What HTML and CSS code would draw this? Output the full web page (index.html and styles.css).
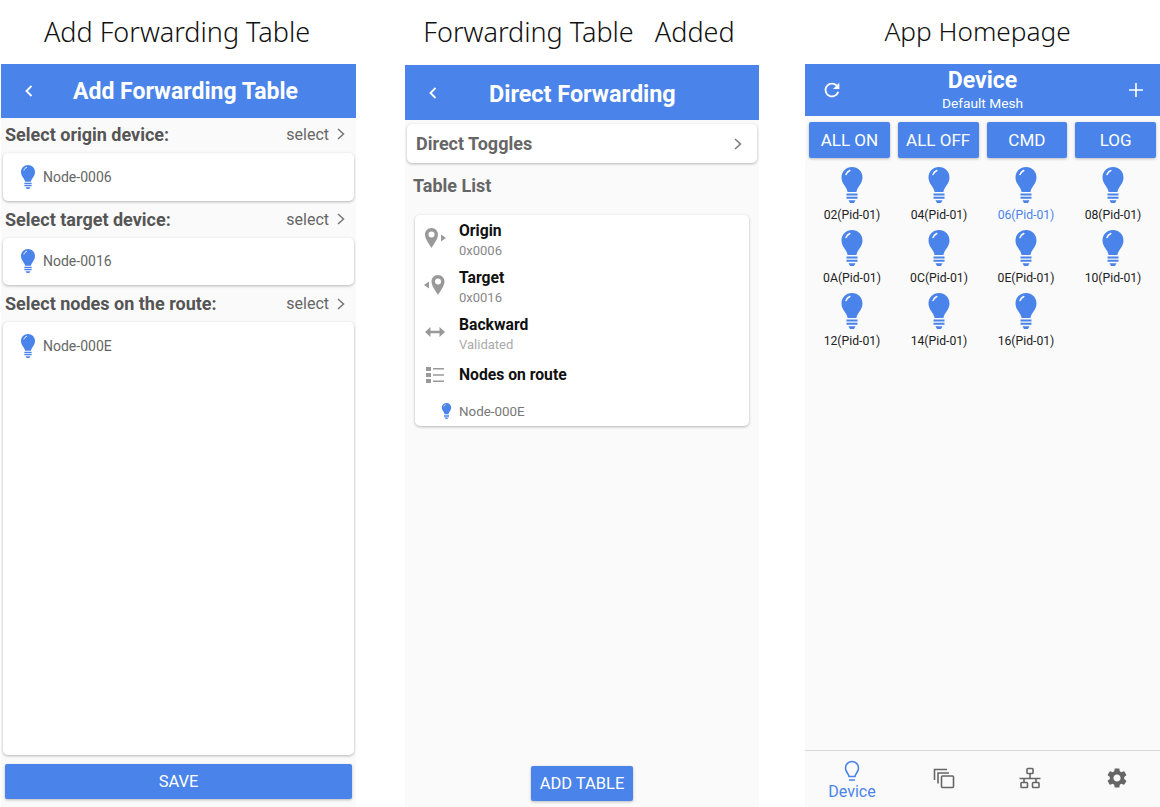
FILE: index.html
```html
<!DOCTYPE html>
<html lang="en">
<head>
    <meta charset="UTF-8">
    <meta name="viewport" content="width=device-width, initial-scale=1.0">
    <title>Direct Forwarding Screens</title>
    <link rel="stylesheet" href="styles.css">
</head>
<body>
    <svg class="defs" width="0" height="0">
        <symbol id="bulb" viewBox="0 0 22 36">
            <path fill="#4a84ea" d="M11 0C5 0 .5 4.600.5 10.400c0 3.200 1.300 5.600 3 8.200 1.300 2 2.700 4 3.100 6.400h8.800c.4-2.400 1.800-4.400 3.100-6.400 1.700-2.600 3-5 3-8.200C21.500 4.600 17 0 11 0z"/>
            <path fill="none" stroke="#fff" stroke-width="1.500" stroke-linecap="round" d="M5 7.500C5.800 5.500 7 4.300 8.800 3.500"/>
            <path fill="#4a84ea" d="M5.500 26.500h11v2h-11zM5.500 29.800h11v2h-11zM7.500 33.200h7L13 36H9z"/>
        </symbol>
    </svg>

    <div class="screens">
        <section class="screen-col">
            <h2 class="shot-title">Add Forwarding Table</h2>
            <div class="phone">
                <header class="app-header">
                    <svg class="back-icon" viewBox="0 0 10 14"><polyline points="7.500,2 2.500,7 7.500,12"/></svg>
                    <div class="app-header-title">Add Forwarding Table</div>
                </header>

                <div class="select-row first">
                    <span class="select-label">Select origin device:</span>
                    <span class="select-action">select <svg class="chevron" viewBox="0 0 10 14"><polyline points="2,2 7.500,7 2,12"/></svg></span>
                </div>
                <div class="card node-card">
                    <svg class="bulb-md"><use href="#bulb"/></svg>
                    <span>Node-0006</span>
                </div>

                <div class="select-row">
                    <span class="select-label">Select target device:</span>
                    <span class="select-action">select <svg class="chevron" viewBox="0 0 10 14"><polyline points="2,2 7.500,7 2,12"/></svg></span>
                </div>
                <div class="card node-card">
                    <svg class="bulb-md"><use href="#bulb"/></svg>
                    <span>Node-0016</span>
                </div>

                <div class="select-row">
                    <span class="select-label">Select nodes on the route:</span>
                    <span class="select-action">select <svg class="chevron" viewBox="0 0 10 14"><polyline points="2,2 7.500,7 2,12"/></svg></span>
                </div>
                <div class="card node-card route-card">
                    <svg class="bulb-md"><use href="#bulb"/></svg>
                    <span>Node-000E</span>
                </div>

                <button class="btn save-btn" type="button">SAVE</button>
            </div>
        </section>

        <section class="screen-col middle-col">
            <h2 class="shot-title">Forwarding Table &nbsp; Added</h2>
            <div class="phone">
                <header class="app-header tall">
                    <svg class="back-icon" viewBox="0 0 10 14"><polyline points="7.500,2 2.500,7 7.500,12"/></svg>
                    <div class="app-header-title">Direct Forwarding</div>
                </header>

                <div class="card toggle-card">
                    <span>Direct Toggles</span>
                    <svg class="chevron" viewBox="0 0 10 14"><polyline points="2,2 7.500,7 2,12"/></svg>
                </div>

                <h3 class="list-title">Table List</h3>

                <div class="card table-card">
                    <div class="table-row">
                        <svg class="row-icon" viewBox="0 0 24 24"><path d="M8.500 2C4.900 2 2 4.900 2 8.500c0 4.500 4.300 9.800 6.500 13.500 2.200-3.700 6.500-9 6.500-13.500C15 4.900 12.100 2 8.500 2zm0 9.500a3 3 0 1 1 0-6 3 3 0 0 1 0 6zM18 8.500l5 3.500-5 3.500z"/></svg>
                        <div><div class="row-name">Origin</div><div class="row-value">0x0006</div></div>
                    </div>
                    <div class="table-row">
                        <svg class="row-icon" viewBox="0 0 24 24"><path d="M15 2c-3.600 0-6.500 2.900-6.500 6.500 0 4.500 4.300 9.800 6.500 13.500 2.200-3.700 6.500-9 6.500-13.500C21.500 4.900 18.600 2 15 2zm0 9.500a3 3 0 1 1 0-6 3 3 0 0 1 0 6zM6 8.500L1 12l5 3.500z"/></svg>
                        <div><div class="row-name">Target</div><div class="row-value">0x0016</div></div>
                    </div>
                    <div class="table-row">
                        <svg class="row-icon" viewBox="0 0 24 24"><path d="M2 12l5.500-5v3.700h9V7l5.500 5-5.500 5v-3.700h-9V17z"/></svg>
                        <div><div class="row-name">Backward</div><div class="row-value light">Validated</div></div>
                    </div>
                    <div class="table-row nodes-row">
                        <svg class="row-icon" viewBox="0 0 24 24"><path d="M3 4h5v4H3zM3 10h5v4H3zM3 16h5v4H3zM10 5h11v1.600H10zM10 11.200h11v1.600H10zM10 17.400h11V19H10z"/></svg>
                        <div class="row-name">Nodes on route</div>
                    </div>
                    <div class="route-node">
                        <svg class="bulb-sm"><use href="#bulb"/></svg>
                        <span>Node-000E</span>
                    </div>
                </div>

                <div class="add-wrap">
                    <button class="btn add-btn" type="button">ADD TABLE</button>
                </div>
            </div>
        </section>

        <section class="screen-col last-col">
            <h2 class="shot-title">App Homepage</h2>
            <div class="phone">
                <header class="home-header">
                    <svg class="refresh-icon" viewBox="0 0 24 24"><path d="M17.650 6.350C16.200 4.900 14.210 4 12 4c-4.420 0-7.990 3.580-7.990 8s3.570 8 7.990 8c3.730 0 6.840-2.550 7.730-6h-2.080c-.82 2.330-3.040 4-5.650 4-3.310 0-6-2.690-6-6s2.690-6 6-6c1.660 0 3.140.69 4.220 1.780L13 11h7V4l-2.350 2.350z"/></svg>
                    <div class="home-title">
                        <div class="home-name">Device</div>
                        <div class="home-mesh">Default Mesh</div>
                    </div>
                    <svg class="plus-icon" viewBox="0 0 16 16"><path d="M8 1v14M1 8h14"/></svg>
                </header>

                <div class="action-row">
                    <button class="btn" type="button">ALL ON</button>
                    <button class="btn" type="button">ALL OFF</button>
                    <button class="btn" type="button">CMD</button>
                    <button class="btn" type="button">LOG</button>
                </div>

                <div class="device-grid">
                    <div class="device"><svg class="bulb-lg"><use href="#bulb"/></svg><span>02(Pid-01)</span></div>
                    <div class="device"><svg class="bulb-lg"><use href="#bulb"/></svg><span>04(Pid-01)</span></div>
                    <div class="device active"><svg class="bulb-lg"><use href="#bulb"/></svg><span>06(Pid-01)</span></div>
                    <div class="device"><svg class="bulb-lg"><use href="#bulb"/></svg><span>08(Pid-01)</span></div>
                    <div class="device"><svg class="bulb-lg"><use href="#bulb"/></svg><span>0A(Pid-01)</span></div>
                    <div class="device"><svg class="bulb-lg"><use href="#bulb"/></svg><span>0C(Pid-01)</span></div>
                    <div class="device"><svg class="bulb-lg"><use href="#bulb"/></svg><span>0E(Pid-01)</span></div>
                    <div class="device"><svg class="bulb-lg"><use href="#bulb"/></svg><span>10(Pid-01)</span></div>
                    <div class="device"><svg class="bulb-lg"><use href="#bulb"/></svg><span>12(Pid-01)</span></div>
                    <div class="device"><svg class="bulb-lg"><use href="#bulb"/></svg><span>14(Pid-01)</span></div>
                    <div class="device"><svg class="bulb-lg"><use href="#bulb"/></svg><span>16(Pid-01)</span></div>
                </div>

                <nav class="tabbar">
                    <div class="tab active">
                        <svg class="tab-icon outline" viewBox="0 0 24 24"><path d="M9 21h6M9 17.500h6c0-2.500 3.500-4 3.500-8.500a6.500 6.500 0 0 0-13 0c0 4.500 3.500 6 3.500 8.500z"/></svg>
                        <span>Device</span>
                    </div>
                    <div class="tab">
                        <svg class="tab-icon outline" viewBox="0 0 24 24"><path d="M2.500 14V3.500H15M6 17.500V7h11"/><rect x="9.500" y="10" width="12" height="11.500" rx="1"/></svg>
                    </div>
                    <div class="tab">
                        <svg class="tab-icon outline" viewBox="0 0 24 24"><rect x="9" y="2.500" width="6" height="5" rx=".8"/><rect x="3" y="16.500" width="6.500" height="5" rx=".8"/><rect x="14.500" y="16.500" width="6.500" height="5" rx=".8"/><path d="M12 7.500v5M1.500 12.500h21M6 12.500v4M18 12.500v4"/></svg>
                    </div>
                    <div class="tab">
                        <svg class="tab-icon" viewBox="0 0 24 24"><path d="M19.140 12.940c.04-.3.06-.61.06-.94 0-.32-.02-.64-.07-.94l2.030-1.580c.18-.14.23-.41.12-.61l-1.920-3.320c-.12-.22-.37-.29-.59-.22l-2.390.96c-.5-.38-1.030-.7-1.620-.94l-.36-2.540c-.04-.24-.24-.41-.48-.41h-3.840c-.24 0-.43.17-.47.41l-.36 2.540c-.59.24-1.130.57-1.620.94l-2.390-.96c-.22-.08-.47 0-.59.22L2.740 8.870c-.12.21-.08.47.12.61l2.030 1.580c-.05.3-.09.63-.09.94s.02.64.07.94l-2.030 1.580c-.18.14-.23.41-.12.61l1.920 3.320c.12.22.37.29.59.22l2.390-.96c.5.38 1.030.7 1.620.94l.36 2.540c.05.24.24.41.48.41h3.840c.24 0 .44-.17.47-.41l.36-2.540c.59-.24 1.130-.56 1.620-.94l2.390.96c.22.08.47 0 .59-.22l1.920-3.320c.12-.22.07-.47-.12-.61l-2.010-1.580zM12 15.600c-1.980 0-3.600-1.620-3.600-3.600s1.620-3.600 3.600-3.600 3.600 1.620 3.600 3.600-1.620 3.600-3.600 3.600z"/></svg>
                    </div>
                </nav>
            </div>
        </section>
    </div>
</body>
</html>
```

FILE: styles.css
```css
body {
    margin: 0;
    height: 807px;
    overflow: hidden;
    background: #fff;
    color: #333;
    font-family: Roboto, "Noto Sans", sans-serif;
}

.defs {
    position: absolute;
}

.screens {
    display: flex;
    height: 807px;
    padding-left: 1px;
}

.screen-col {
    display: flex;
    flex-direction: column;
    width: 355px;
}

.middle-col {
    width: 354px;
    margin-left: 49px;
}

.last-col {
    margin-left: 46px;
}

.shot-title {
    height: 64px;
    margin: 0;
    padding-right: 3px;
    box-sizing: border-box;
    line-height: 63px;
    text-align: center;
    font-family: "Noto Sans", sans-serif;
    font-size: 27px;
    font-weight: 300;
    color: #111;
    white-space: pre;
}

.middle-col .shot-title {
    padding-right: 6px;
}

.last-col .shot-title {
    padding-right: 10px;
    font-size: 26.200px;
}

.phone {
    flex: 1;
    display: flex;
    flex-direction: column;
    min-height: 0;
    background: #fafafa;
}

/* headers */
.app-header {
    display: flex;
    align-items: center;
    height: 54px;
    flex-shrink: 0;
    padding-left: 23px;
    background: #4a84ea;
    color: #fff;
}

.app-header.tall {
    height: 55px;
    margin-top: 1px;
}

.app-header-title {
    margin-left: 39px;
    font-size: 23px;
    font-weight: 700;
}

.tall .app-header-title {
    margin-left: 51px;
    padding-top: 2px;
    font-size: 23.400px;
}

.back-icon {
    width: 10px;
    height: 14px;
    fill: none;
    stroke: #fff;
    stroke-width: 1.8;
}

.chevron {
    width: 10px;
    height: 14px;
    fill: none;
    stroke: #777;
    stroke-width: 1.5;
}

/* add table screen */
.select-row {
    display: flex;
    justify-content: space-between;
    align-items: center;
    height: 37px;
    padding: 0 10px 0 4px;
}

.select-row.first {
    height: 35px;
    padding-bottom: 3px;
    box-sizing: border-box;
}

.select-label {
    font-size: 18px;
    font-weight: 700;
    color: #555;
}

.select-action {
    display: flex;
    align-items: center;
    gap: 7px;
    font-size: 16px;
    color: #666;
}

.card {
    background: #fff;
    border-radius: 5px;
    box-shadow: 0 1px 3px rgba(0, 0, 0, 0.28);
}

.node-card {
    display: flex;
    align-items: center;
    gap: 7px;
    height: 47.500px;
    margin: 0 2px;
    padding-left: 17px;
    font-size: 14px;
    color: #666;
}

.route-card {
    flex: 1;
    align-items: flex-start;
    padding-top: 12px;
}

.route-card span {
    line-height: 24px;
}

.bulb-md {
    width: 16px;
    height: 24px;
}

.save-btn {
    height: 35px;
    flex-shrink: 0;
    margin: 9px 4px 8px;
}

.btn {
    border: none;
    border-radius: 2px;
    background: #4a84ea;
    color: #fff;
    font-family: Roboto, "Noto Sans", sans-serif;
    font-size: 16.500px;
    box-shadow: 0 1px 3px rgba(0, 0, 0, 0.25);
}

/* direct forwarding screen */
.toggle-card {
    display: flex;
    justify-content: space-between;
    align-items: center;
    height: 39px;
    margin: 4px 2px 0;
    padding: 0 14px 0 9px;
    font-size: 18px;
    font-weight: 700;
    color: #666;
}

.list-title {
    margin: 0;
    padding: 12px 0 0 8px;
    height: 39px;
    box-sizing: border-box;
    font-size: 18px;
    font-weight: 700;
    color: #666;
}

.table-card {
    margin: 13px 10px 0;
    padding-top: 1px;
    height: 210px;
}

.table-row {
    display: flex;
    align-items: center;
    gap: 12px;
    height: 47px;
    padding-left: 8px;
}

.row-icon {
    width: 24px;
    height: 24px;
    flex-shrink: 0;
    margin-top: -4px;
    fill: #999;
}

.row-name {
    font-size: 15.700px;
    font-weight: 700;
    color: #111;
}

.row-value {
    margin-top: 3px;
    font-size: 13px;
    color: #888;
}

.row-value.light {
    color: #aaa;
}

.nodes-row {
    height: 35px;
}

.nodes-row .row-icon {
    margin-top: 0;
}

.route-node {
    display: flex;
    align-items: center;
    gap: 7px;
    padding-left: 26px;
    margin-top: 11px;
    font-size: 13.400px;
    color: #777;
}

.bulb-sm {
    width: 11px;
    height: 16px;
}

.add-wrap {
    display: flex;
    justify-content: center;
    margin-top: auto;
    padding-bottom: 6px;
}

.add-btn {
    width: 102px;
    height: 35px;
    padding: 0;
}

/* homepage */
.home-header {
    display: flex;
    align-items: center;
    justify-content: space-between;
    height: 52px;
    flex-shrink: 0;
    padding: 0 16px;
    background: #4a84ea;
    color: #fff;
}

.home-title {
    text-align: center;
}

.home-name {
    font-size: 23px;
    font-weight: 700;
    line-height: 26px;
}

.home-mesh {
    font-size: 13.700px;
    line-height: 18px;
}

.refresh-icon {
    width: 22px;
    height: 22px;
    fill: #fff;
}

.plus-icon {
    width: 16px;
    height: 16px;
    margin-left: 6px;
    stroke: #fff;
    stroke-width: 1.6;
    fill: none;
}

.action-row {
    display: grid;
    grid-template-columns: repeat(4, 1fr);
    gap: 8px;
    padding: 6px 4px 0;
}

.action-row .btn {
    height: 36px;
    padding: 0;
    font-size: 17px;
}

.device-grid {
    display: grid;
    grid-template-columns: repeat(4, 87px);
    padding: 9px 0 0 3.500px;
}

.device {
    display: flex;
    flex-direction: column;
    align-items: center;
    height: 63px;
    font-size: 12.200px;
    color: #222;
}

.device span {
    margin-top: 5px;
}

.device.active {
    color: #4a84ea;
}

.bulb-lg {
    width: 22px;
    height: 36px;
    flex-shrink: 0;
}

.tabbar {
    display: flex;
    justify-content: space-between;
    height: 56px;
    flex-shrink: 0;
    margin-top: auto;
    padding: 0 13px 0 17px;
    border-top: 1px solid #d8d8d8;
}

.tab {
    display: flex;
    flex-direction: column;
    align-items: center;
    width: 60px;
    padding-top: 8px;
    color: #4a84ea;
    font-size: 16px;
    line-height: 18px;
}

.tab:nth-child(2) {
    margin-left: 5px;
}

.tab-icon {
    width: 24px;
    height: 24px;
    margin-top: 7px;
    fill: #666;
}

.tab-icon.outline {
    fill: none;
    stroke: #666;
    stroke-width: 1.6;
}

.tab.active .tab-icon {
    margin-top: 0;
    stroke: #4a84ea;
}
```
